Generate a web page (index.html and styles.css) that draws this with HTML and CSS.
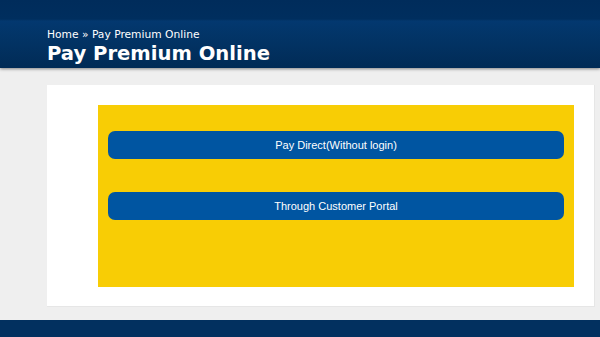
FILE: index.html
```
<!DOCTYPE html>
<html>
<head>
<meta charset="utf-8">
<link rel="stylesheet" href="styles.css">
</head>
<body>
<header class="header">
  <div class="header-inner">
    <div class="crumbs">Home » Pay Premium Online</div>
    <h1 class="title">Pay Premium Online</h1>
  </div>
</header>
<main class="main">
  <div class="card">
    <div class="panel">
      <a class="btn" href="#">Pay Direct(Without login)</a>
      <a class="btn" href="#">Through Customer Portal</a>
    </div>
  </div>
</main>
<footer class="footer"></footer>
</body>
</html>
```
FILE: styles.css
```
html, body { margin: 0; padding: 0; }
body {
  width: 600px;
  height: 337px;
  overflow: hidden;
  background: #efefef;
  font-family: "DejaVu Sans", Verdana, sans-serif;
}
.header {
  height: 68px;
  background: linear-gradient(to bottom, #002c5b 0px, #002e5e 19px, #03386f 21px, #023262 45px, #012b56 68px);
  box-shadow: 0 1px 3px rgba(0,0,0,0.45);
  position: relative;
  z-index: 1;
}
.header-inner {
  padding: 28px 0 0 47px;
  color: #fff;
}
.crumbs {
  font-size: 10.7px;
  line-height: 14px;
}
.title {
  margin: 0;
  font-size: 19.6px;
  font-weight: bold;
  line-height: 23px;
}
.main {
  padding: 17px 5px 0 47px;
  height: 252px;
  box-sizing: border-box;
}
.card {
  background: #fff;
  height: 222px;
  padding: 20px 20px 20px 51px;
  box-sizing: border-box;
  border-right: 1px solid #e6e6e6;
  border-bottom: 1px solid #e6e6e6;
}
.panel {
  background: #f8cd05;
  height: 182px;
  padding: 26px 10px 0 10px;
  box-sizing: border-box;
  display: flex;
  flex-direction: column;
  gap: 33px;
}
.btn {
  display: flex;
  align-items: center;
  justify-content: center;
  height: 28px;
  border-radius: 7px;
  background: #0055a1;
  color: #fff;
  text-decoration: none;
  font-family: "Liberation Sans", Arial, sans-serif;
  font-size: 11px;
}
.footer {
  height: 17px;
  background: #02305f;
}
```
